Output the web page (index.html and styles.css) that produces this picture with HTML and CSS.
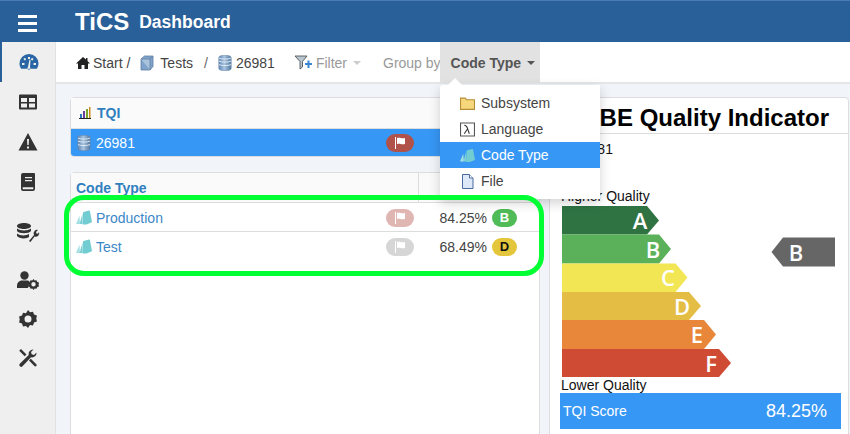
FILE: index.html
```html
<!DOCTYPE html>
<html lang="en">
<head>
<meta charset="utf-8">
<title>TiCS Dashboard</title>
<link rel="stylesheet" href="styles.css">
</head>
<body>
<svg class="defs" width="0" height="0" aria-hidden="true">
  <defs>
    <linearGradient id="db" x1="0" x2="1" y1="0" y2="0"><stop offset="0" stop-color="#5f86b3"/><stop offset=".45" stop-color="#a9c4e0"/><stop offset="1" stop-color="#4f779f"/></linearGradient>
    <symbol id="i-db" viewBox="0 0 14 16"><path d="M.8 2.500c0-3 12.400-3 12.400 0v11c0 3-12.400 3-12.400 0z" fill="url(#db)" stroke="#6b88a8" stroke-width=".6"/><path d="M1 6c2 1.400 10 1.400 12 0M1 9.500c2 1.400 10 1.400 12 0M1 3c2 1.400 10 1.400 12 0" fill="none" stroke="#e8f0f8" stroke-width=".9"/></symbol>
    <symbol id="i-type" viewBox="0 0 16 15"><path d="M0 14 3.500 5.500 4 14z" fill="#a5e0e3"/><path d="M3.500 14 6.500 3.500 6.500 14z" fill="#7fd0d5"/><path d="M7.500 2 13 .5q.7-.2.9.5l2 10.500q.1.700-.5 1L10.500 14.500H7q-.6 0-.5-.7L7 2.700q.1-.5.5-.7z" fill="#72cdd2"/></symbol>
    <symbol id="i-flag" viewBox="0 0 14 14"><path d="M2 1h1v12H2z" fill="#fff"/><path d="M4 2c3-1 4 1 8 0v6c-4 1-5-1-8 0z" fill="#fff"/></symbol>
  </defs>
</svg>

<header class="topbar">
  <div class="burger"><span></span><span></span><span></span></div>
  <span class="logo">TiCS</span>
  <span class="app-title">Dashboard</span>
</header>

<div class="shell">
  <nav class="sidebar">
    <a class="side-item active"><svg class="side-icon" viewBox="0 0 20 20"><path fill-rule="evenodd" d="M10 2a9.500 9.500 0 0 0-9.500 9.500c0 2 .6 3.800 1.600 5.300h15.800a9.500 9.500 0 0 0 1.600-5.300A9.500 9.500 0 0 0 10 2zM9 5h2v2H9zM4.500 7l1.400-1.200 1.300 1.400-1.400 1.300zM3 11h2.500v2H3zm11.500 0H17v2h-2.500zM13 5.800l1.500 1.100-1.200 1.600-1.500-1.100zM9 15l1.500-7.500 1 .2L11 15.300A1.500 1.500 0 1 1 9 15z" fill="#2a66a3"/></svg></a>
    <a class="side-item"><svg class="side-icon" viewBox="0 0 20 20"><path fill-rule="evenodd" d="M2 2.500h16a1 1 0 0 1 1 1v13a1 1 0 0 1-1 1H2a1 1 0 0 1-1-1v-13a1 1 0 0 1 1-1zM3 6v4h6V6zm8 0v4h6V6zM3 11.500V15.500h6v-4zm8 0v4h6v-4z" fill="#333"/></svg></a>
    <a class="side-item"><svg class="side-icon" viewBox="0 0 20 20"><path fill-rule="evenodd" d="M10 1l9.500 17.500H.5zM9 7l.3 6h1.400L11 7zm0 7.500V16.500h2v-2z" fill="#333"/></svg></a>
    <a class="side-item"><svg class="side-icon" viewBox="0 0 20 20"><path fill-rule="evenodd" d="M5 1h11a1 1 0 0 1 1 1v15a2 2 0 0 1-2 2H5a2 2 0 0 1-2-2V3a2 2 0 0 1 2-2zm2 4v1.300h7V5zm0 3v1.300h7V8zM4.700 15.300v2h10.600v-2z" fill="#333"/></svg></a>
    <a class="side-item first-lower"><svg class="side-icon wide" viewBox="0 0 24 20"><path d="M1 4c0-4 14-4 14 0s-14 4-14 0zM1 6.500c3 2.500 11 2.500 14 0V9c-2 3-12 3-14 0zM1 11.500c3 2.500 9 2.500 12 .5v3c-2 2-10 2-12-1z" fill="#333"/><path d="M14 19l5-6a3.500 3.500 0 0 1 4-5l-2 2 .5 1.500 1.500.3 1-1.800a3.500 3.500 0 0 1-4.500 4.500l-4 5.500z" fill="#333" transform="translate(-1 0)"/></svg></a>
    <a class="side-item lower user"><svg class="side-icon wide" viewBox="0 0 22 20"><circle cx="7.500" cy="5.500" r="4.200" fill="#333"/><path d="M0 18v-2.500C0 12 3 10.500 5 10.500h5c1 0 2 .5 2.500 1L11 18z" fill="#333"/><path fill-rule="evenodd" d="M16.500 9l1.200 1.500 1.800-.3.800 1.700 1.700.7-.4 1.900.4 1.900-1.700.7-.8 1.700-1.800-.3-1.200 1.400-1.200-1.400-1.800.3-.8-1.700-1.700-.7.400-1.900-.4-1.900 1.700-.7.800-1.700 1.800.3zm0 3a2.200 2.200 0 1 0 0 4.400 2.200 2.200 0 0 0 0-4.400z" fill="#333"/></svg></a>
    <a class="side-item lower"><svg class="side-icon" viewBox="0 0 20 20"><path fill-rule="evenodd" d="M10 1l2 2.300 3-.6 1 2.900 2.900 1-.6 3 .6 3-2.900 1-1 2.900-3-.6L10 19l-2-2.100-3 .6-1-2.900-2.900-1 .6-3-.6-3 2.900-1 1-2.900 3 .6zm0 5.500a3.500 3.500 0 1 0 0 7 3.500 3.500 0 0 0 0-7z" fill="#333"/></svg></a>
    <a class="side-item lower"><svg class="side-icon" viewBox="0 0 20 20"><path d="M3 1l5.500 5.500-1.800 1.800L1.200 2.800zM18.500 4.500a4.500 4.500 0 0 1-5.500 4.800L4.500 18.200a1.800 1.800 0 0 1-2.700-2.500L10.700 7A4.500 4.500 0 0 1 15.500 1.500l-2.500 2.500.7 2.300 2.300.7z" fill="#333"/><path d="M11 12.500l1.800-1.800 5.500 5.500a1.300 1.300 0 0 1-1.900 1.900z" fill="#333"/></svg></a>
  </nav>

  <main class="main">
    <div class="crumbs">
      <svg class="crumb-icon home" viewBox="0 0 14 14"><path d="M7 1 0 7.500h2V13h3.500V9h3v4H12V7.500h2L11.500 5V2H10v1.600z" fill="#222"/></svg>
      <span class="crumb">Start /</span>
      <svg class="crumb-icon cube" viewBox="0 0 14 16"><path d="M1 4 4.500 1H13v10.500L10 15H1z" fill="#7fa3cc" stroke="#5f7f9f" stroke-width=".8"/><path d="M1 4h9v11" fill="#a9c3dc" stroke="#5f7f9f" stroke-width=".8"/><path d="M10 4l3-3" fill="none" stroke="#5f7f9f" stroke-width=".8"/></svg>
      <span class="crumb tests">Tests</span>
      <span class="crumb slash">/</span>
      <svg class="crumb-icon db"><use href="#i-db"/></svg>
      <span class="crumb num">26981</span>
      <svg class="crumb-icon filter" viewBox="0 0 17 15"><path d="M0 1h12L7.500 6.500V12L5 14V6.500z" fill="#b8c6d2" stroke="#444" stroke-width=".8"/><path d="M10 8h2.500V5.500h2V8H17v2h-2.500v3h-2v-3H10z" fill="#3a86d0"/></svg>
      <span class="filter-label">Filter</span><span class="caret muted"></span>
      <span class="group-label">Group by</span>
      <button class="group-btn" type="button">Code Type<span class="caret dark"></span></button>
    </div>

    <div class="content">
      <div class="col-left">
        <section class="panel tqi">
          <div class="panel-head">
            <svg class="bars" viewBox="0 0 12 12"><path d="M0 11.500h12" stroke="#222" stroke-width="1"/><path d="M1 7h2v4H1z" fill="#2a7ab8"/><path d="M4 4h2v7H4z" fill="#6a3fa0"/><path d="M7 2h2v9H7z" fill="#7ba428"/><path d="M10 0h1.500v11H10z" fill="#c98a1e"/></svg>
            <span class="head-text">TQI</span>
          </div>
          <div class="row selected">
            <svg class="row-db"><use href="#i-db"/></svg>
            <span class="row-name">26981</span>
            <span class="pill flag-red"><svg class="flag"><use href="#i-flag"/></svg></span>
            <span class="row-tail"></span>
          </div>
        </section>

        <section class="panel types">
          <div class="panel-head split">
            <span class="head-text">Code Type</span>
            <span class="head-cell"></span>
          </div>
          <div class="row first-row">
            <svg class="row-type"><use href="#i-type"/></svg>
            <a class="row-name link">Production</a>
            <span class="pill flag-pink"><svg class="flag"><use href="#i-flag"/></svg></span>
            <span class="score">84.25%</span>
            <span class="grade grade-b">B</span>
          </div>
          <div class="row">
            <svg class="row-type"><use href="#i-type"/></svg>
            <a class="row-name link">Test</a>
            <span class="pill flag-grey"><svg class="flag"><use href="#i-flag"/></svg></span>
            <span class="score">68.49%</span>
            <span class="grade grade-d">D</span>
          </div>
        </section>
      </div>

      <section class="panel label">
        <h2 class="label-title">LABE Quality Indicator</h2>
        <div class="label-sub">26981</div>
        <div class="scale-text upper">Higher Quality</div>
        <svg class="chart" viewBox="0 0 278 171" role="img">
          <path d="M0 0h85l12 14.500-12 14H0z" fill="#2f7343"/>
          <path d="M0 28.500h97l12 14.500-12 14.500H0z" fill="#5bb159"/>
          <path d="M0 57.500h113.500l12 14-12 14.500H0z" fill="#f2e654"/>
          <path d="M0 86h127l12 14-12 14H0z" fill="#e4bd44"/>
          <path d="M0 114h142l12 14.500-12 14.500H0z" fill="#e8873a"/>
          <path d="M0 143h157l12 14-12 14H0z" fill="#cf4b33"/>
          <path d="M221 31.500h52v29h-52l-11.500-14.500z" fill="#666"/>
          <g class="chart-letters">
            <text x="78" y="23">A</text>
            <text x="91" y="52">B</text>
            <text x="106" y="80">C</text>
            <text x="120" y="109">D</text>
            <text x="135" y="137">E</text>
            <text x="149" y="166">F</text>
            <text x="234" y="55">B</text>
          </g>
        </svg>
        <div class="scale-text lower-text">Lower Quality</div>
        <div class="score-bar"><span>TQI Score</span><span class="score-value">84.25%</span></div>
      </section>
    </div>
  </main>
</div>

<div class="menu-arrow"></div>
<ul class="menu">
  <li class="menu-item"><svg class="menu-icon" viewBox="0 0 14 13"><path d="M.5 12V1.500h4.500l1 1.500h7.500v9z" fill="#f6d77c" stroke="#b58f35"/></svg>Subsystem</li>
  <li class="menu-item"><svg class="menu-icon" viewBox="0 0 14 13"><path d="M.5.500h13v12H.5z" fill="#fff" stroke="#555"/><path d="M4 2.500c2 0 2.500 1 3 3l1.700 5M7 6l-3 4.500" fill="none" stroke="#333"/></svg>Language</li>
  <li class="menu-item current"><svg class="menu-icon"><use href="#i-type"/></svg>Code Type</li>
  <li class="menu-item"><svg class="menu-icon" viewBox="0 0 14 15"><path d="M2 .500h7l3.500 3.500v10.500H2z" fill="#dce8f8" stroke="#4a6aa0"/><path d="M9 .500V4h3.500" fill="#fff" stroke="#4a6aa0"/></svg>File</li>
</ul>

<div class="highlight"></div>
</body>
</html>
```
FILE: styles.css
```css
* { box-sizing: border-box; }
html, body { margin: 0; padding: 0; height: 434px; overflow: hidden; }
body { font-family: "Liberation Sans", Arial, sans-serif; font-size: 14px; color: #333; background: #f1f5f9; position: relative; }
.defs { position: absolute; }

.topbar { height: 42px; background: #2a6099; border-top: 1px solid #4a7cb3; padding-top: 1px; display: flex; align-items: center; color: #fff; }
.burger { width: 19px; margin: 3px 0 0 18px; display: flex; flex-direction: column; gap: 4px; }
.burger span { display: block; height: 3px; background: #fff; }
.logo { margin-left: 38px; font-size: 24px; font-weight: 700; letter-spacing: 0; line-height: 1; }
.app-title { margin-left: 10px; font-size: 17.500px; font-weight: 700; }

.shell { display: flex; height: 392px; }
.sidebar { width: 56px; flex: none; background: #efefef; border-right: 1px solid #e2e2e2; display: flex; flex-direction: column; }
.side-item { height: 40px; display: flex; align-items: center; justify-content: center; }
.side-item.active { border-left: 2px solid #2a6099; }
.first-lower { margin-top: 10px; }
.lower { height: 39px; }
.user { margin-top: 8px; }
.side-icon { width: 20px; height: 20px; }
.side-icon.wide { width: 24px; }

.main { flex: 1; min-width: 0; display: flex; flex-direction: column; }
.crumbs { height: 42px; flex: none; background: #fff; border-bottom: 2px solid #e4e6e8; display: flex; align-items: center; padding: 1px 0 0 20px; }
.crumb { color: #444; white-space: nowrap; }
.crumb-icon { flex: none; }
.home { width: 14px; height: 14px; margin-right: 3px; }
.cube { width: 14px; height: 16px; margin-left: 10px; margin-right: 6px; }
.slash { margin-left: 11px; color: #666; }
.db { width: 14px; height: 16px; margin-left: 10px; margin-right: 4px; }
.filter { width: 17px; height: 15px; margin-left: 20px; margin-right: 4px; }
.filter-label, .group-label { color: #999; }
.caret { display: inline-block; width: 0; height: 0; border-left: 4px solid transparent; border-right: 4px solid transparent; border-top: 4px solid #ccc; }
.caret.muted { margin-left: 6px; }
.caret.dark { border-top-color: #555; margin-left: 6px; }
.group-label { margin-left: 22px; }
.group-btn { width: 100px; height: 41px; padding: 1px 0 0 11px; margin: -1px 0 0 -1px; border: 0; background: #e2e2e2; color: #555; font: 700 14px "Liberation Sans", Arial, sans-serif; text-align: left; display: flex; align-items: center; }

.content { flex: 1; display: flex; gap: 9px; padding: 13px 0 0 14px; min-height: 0; }
.col-left { width: 470px; flex: none; display: flex; flex-direction: column; gap: 15px; }
.panel { background: #fff; border: 1px solid #ddd; border-radius: 4px; }
.tqi { height: 60px; }
.types { flex: 1; border-radius: 4px 4px 0 0; margin-bottom: -10px; }
.panel-head { height: 31px; background: #fafafa; border-bottom: 1px solid #ddd; display: flex; align-items: center; padding-left: 8px; }
.panel-head.split { padding-left: 5px; height: 30px; }
.head-text { color: #2f7fbf; font-weight: 700; }
.bars { width: 12px; height: 12px; margin-right: 6px; }
.head-cell { margin-left: auto; width: 121px; height: 100%; border-left: 1px solid #ddd; }

.row { height: 29px; display: flex; align-items: center; padding-left: 5px; border-bottom: 1px solid #ddd; }
.first-row { padding-top: 1px; }
.row.selected { height: 27px; background: #3797f5; color: #fff; border-bottom: 0; border-radius: 0 0 3px 3px; padding-left: 6px; }
.row-db { width: 14px; height: 16px; margin-right: 5px; flex: none; }
.row-type { width: 16px; height: 15px; margin-right: 4px; flex: none; }
.row-name { flex: 1; }
.link { color: #3a87c8; }
.row-tail { width: 125px; flex: none; }
.pill { width: 28px; height: 18px; border-radius: 9px; flex: none; display: flex; align-items: center; justify-content: center; }
.flag { width: 14px; height: 14px; }
.flag-red { background: #b0524a; }
.flag-pink { background: #e0b6b3; }
.flag-grey { background: #d6d6d6; }
.score { width: 73px; flex: none; text-align: right; color: #444; }
.grade { width: 25px; height: 18px; border-radius: 9px; margin-left: 5px; margin-right: 22px; flex: none; display: flex; align-items: center; justify-content: center; font-size: 13px; font-weight: 700; }
.grade-b { background: #4fbc57; color: #fff; }
.grade-d { background: #e4c63c; color: #111; }
.types .row:last-child { border-bottom: 0; }

.label { width: 300px; flex: none; margin-bottom: -10px; border-radius: 4px 4px 0 0; padding: 0; overflow: hidden; }
.label-title { margin: 0; height: 36px; border-bottom: 1px solid #ddd; color: #000; font-size: 24px; font-weight: 700; line-height: 40px; white-space: nowrap; padding-right: 19px; text-align: right; }
.label-sub { color: #111; padding-left: 24px; height: 24px; line-height: 24px; margin-top: 3px; }
.scale-text { color: #111; padding-left: 11px; line-height: 16px; height: 16px; }
.upper { margin-top: 27px; margin-bottom: 2px; }
.chart { display: block; width: 278px; height: 171px; margin-left: 12px; }
.chart-letters text { fill: #fff; font-family: "Open Sans", sans-serif; font-size: 22px; font-weight: 600; text-anchor: middle; }
.score-bar { width: 281px; height: 36px; margin-left: 10px; background: #3797f5; color: #fff; display: flex; align-items: center; justify-content: space-between; padding: 0 14px 0 3px; }
.score-value { font-size: 18px; }

.menu { position: absolute; left: 440px; top: 85px; width: 160px; height: 114px; margin: 0; padding: 5px 0; list-style: none; background: #fff; box-shadow: 0 4px 12px rgba(0,0,0,.18); border-radius: 3px 0 0 3px; }
.menu-arrow { position: absolute; left: 448px; top: 78px; width: 0; height: 0; border-left: 7px solid transparent; border-right: 7px solid transparent; border-bottom: 7px solid #fff; z-index: 2; }
.menu-item { height: 26px; display: flex; align-items: center; padding-left: 20px; color: #444; }
.menu-item.current { background: #3797f5; color: #fff; }
.menu-icon { width: 15px; height: 15px; margin-right: 6px; flex: none; }

.highlight { position: absolute; left: 64px; top: 195px; width: 480px; height: 81px; border: 5px solid #00ff33; border-radius: 20px; }
```
